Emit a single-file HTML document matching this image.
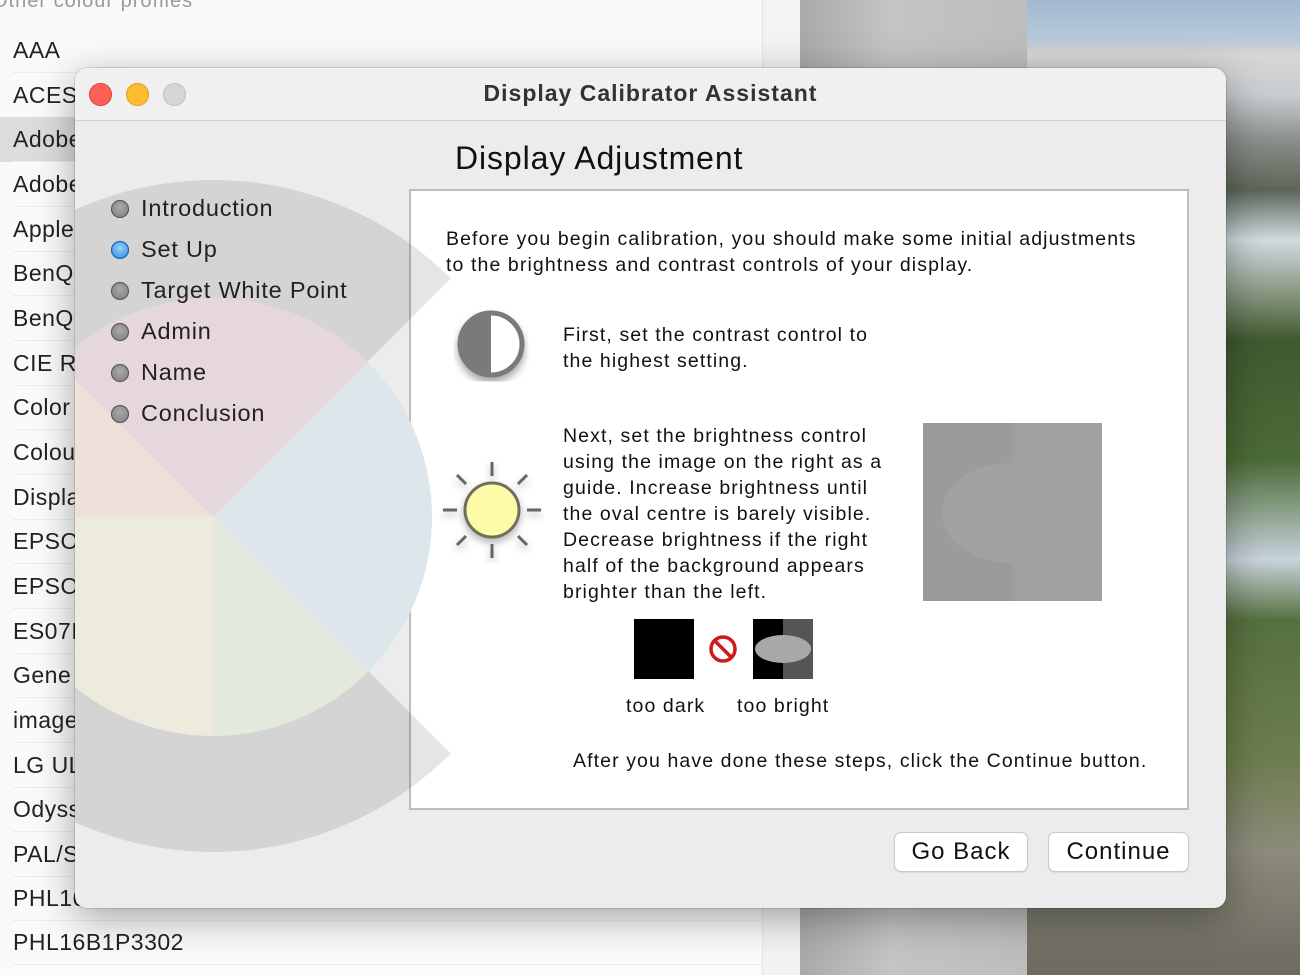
<!DOCTYPE html>
<html><head><meta charset="utf-8"><style>
*{margin:0;padding:0;box-sizing:border-box}
body{width:1300px;height:975px;overflow:hidden;position:relative;font-family:"Liberation Sans",sans-serif;background:#fff}
.list{position:absolute;left:0;top:0;width:762px;height:975px;background:#fafafa}
.list .hdr{position:absolute;left:-8px;top:-10px;font-size:20px;color:#999;letter-spacing:1px}
.row{position:absolute;left:0;width:762px;height:44.7px;font-size:23px;color:#222;padding-left:13px;line-height:44px;letter-spacing:.5px}
.row:after{content:"";position:absolute;left:13px;right:0;bottom:0;height:1px;background:#ececec}
.strip{position:absolute;left:762px;top:0;width:38px;height:975px;background:#f3f3f3;border-left:1px solid #e4e4e4}
.gray{position:absolute;left:800px;top:0;width:227px;height:975px;background:linear-gradient(90deg,#a9a9a9,#c4c4c4 40%,#bdbdbd)}
.photo{position:absolute;left:1027px;top:0;width:273px;height:975px;background:
linear-gradient(180deg,#9fb8d2 0,#b9c9da 40px,#d9d6d2 55px,#c7ccd2 95px,#8a8f8a 140px,#5c6658 190px,#d2dae2 240px,#8e9a86 290px,#3f5a30 340px,#4b6b36 460px,#c8d2dc 560px,#55703e 620px,#6d7e4e 760px,#8c8b7c 850px,#6c6a60 975px)}
.win{position:absolute;left:75px;top:68px;width:1151px;height:840px;background:#ececec;border-radius:12px;box-shadow:0 10px 40px rgba(0,0,0,.35),0 0 0 1px rgba(0,0,0,.12);overflow:hidden}
.title{height:53px;border-bottom:1px solid #d2d2d2;background:#f0f0f0;text-align:center;font-weight:bold;font-size:23px;line-height:50px;color:#333;letter-spacing:1px}
.dot{position:absolute;top:15px;width:23px;height:23px;border-radius:50%}
.box{position:absolute;left:334px;top:121px;width:780px;height:621px;background:#fff;border:2px solid #bdbdbd}
.h1{position:absolute;left:380px;top:72px;font-size:32px;color:#111;letter-spacing:.9px}
.steps{position:absolute;left:36px;top:127px;font-size:23.5px;color:#222;letter-spacing:.8px}
.steps div{height:41px;position:relative;padding-left:30px}
.steps div:before{content:"";position:absolute;left:0;top:5px;width:18px;height:18px;border-radius:50%;background:radial-gradient(circle at 50% 40%,#aaa,#777);box-shadow:inset 0 0 0 1px #555}
.steps div.on:before{background:radial-gradient(circle at 50% 40%,#9ad3ff,#1a7de0);box-shadow:inset 0 0 0 1px #1a5ea8}
.t{position:absolute;font-size:19.5px;color:#111;line-height:26px;letter-spacing:1.1px}
.btn{position:absolute;top:765px;height:38px;background:#fff;border-radius:6px;box-shadow:0 0 0 1px #c8c8c8,0 1px 2px rgba(0,0,0,.2);font-size:24px;text-align:center;line-height:37px;color:#111;letter-spacing:1px}
.wheel{position:absolute;left:-198px;top:112px;width:672px;height:672px;border-radius:50%;pointer-events:none;
background:conic-gradient(rgba(0,0,0,.1) 0 45deg,transparent 45deg 135deg,rgba(0,0,0,.1) 135deg 360deg);}
.inner{position:absolute;left:-81px;top:230px;width:438px;height:438px;border-radius:50%;
background:conic-gradient(#e6d7dd 0 45deg,#dde6ea 45deg 135deg,#e4e9de 135deg 180deg,#ecebdc 180deg 270deg,#ede1d9 270deg 315deg,#e6d7dd 315deg)}
</style></head><body>
<div class="list">
<div class="hdr">Other colour profiles</div>
<div class="row" style="top:28px">AAA</div>
<div class="row" style="top:73px">ACES</div>
<div class="row" style="top:117px;background:#dcdcdc">Adobe</div>
<div class="row" style="top:162px">Adobe</div>
<div class="row" style="top:207px">Apple</div>
<div class="row" style="top:251px">BenQ</div>
<div class="row" style="top:296px">BenQ</div>
<div class="row" style="top:341px">CIE R</div>
<div class="row" style="top:385px">Color</div>
<div class="row" style="top:430px">Colou</div>
<div class="row" style="top:475px">Displa</div>
<div class="row" style="top:519px">EPSO</div>
<div class="row" style="top:564px">EPSO</div>
<div class="row" style="top:609px">ES07I</div>
<div class="row" style="top:653px">Gene</div>
<div class="row" style="top:698px">image</div>
<div class="row" style="top:743px">LG UL</div>
<div class="row" style="top:787px">Odyss</div>
<div class="row" style="top:832px">PAL/S</div>
<div class="row" style="top:876px">PHL16</div>
<div class="row" style="top:920px">PHL16B1P3302</div>
</div>
<div class="strip"></div>
<div class="gray"></div>
<div class="photo"></div>
<div class="win">
<div class="title">Display Calibrator Assistant</div>
<div class="dot" style="left:14px;background:#fe5f57;box-shadow:inset 0 0 0 1px #e0443e"></div>
<div class="dot" style="left:51px;background:#febc2e;box-shadow:inset 0 0 0 1px #dea123"></div>
<div class="dot" style="left:88px;background:#d5d5d5;box-shadow:inset 0 0 0 1px #c2c2c2"></div>
<div class="h1">Display Adjustment</div>
<div class="box"></div>
<div class="wheel"></div>
<div class="inner"></div>
<div class="steps">
<div>Introduction</div><div class="on">Set Up</div><div>Target White Point</div><div>Admin</div><div>Name</div><div>Conclusion</div>
</div>
<div class="t" style="left:371px;top:158px">Before you begin calibration, you should make some initial adjustments<br>to the brightness and contrast controls of your display.</div>
<svg style="position:absolute;left:370px;top:236px" width="90" height="90">
<defs><filter id="s"><feDropShadow dx="0" dy="5" stdDeviation="4" flood-opacity=".35"/></filter></defs>
<g filter="url(#s)"><circle cx="46" cy="40" r="31" fill="#fff" stroke="#7a7a7a" stroke-width="5"/><path d="M46 9 A31 31 0 0 0 46 71 Z" fill="#7a7a7a"/></g>
</svg>
<div class="t" style="left:488px;top:254px">First, set the contrast control to<br>the highest setting.</div>
<svg style="position:absolute;left:364px;top:390px" width="105" height="105">
<defs><filter id="s2"><feDropShadow dx="0" dy="4" stdDeviation="4" flood-opacity=".3"/></filter></defs>
<g stroke="#666" stroke-width="3" filter="url(#s2)">
<line x1="53" y1="4" x2="53" y2="18"/><line x1="53" y1="86" x2="53" y2="100"/>
<line x1="4" y1="52" x2="18" y2="52"/><line x1="88" y1="52" x2="102" y2="52"/>
<line x1="18" y1="17" x2="27" y2="26"/><line x1="88" y1="17" x2="79" y2="26"/>
<line x1="18" y1="87" x2="27" y2="78"/><line x1="88" y1="87" x2="79" y2="78"/>
<circle cx="53" cy="52" r="27" fill="#fdfaa8" stroke="#6f6f5a"/></g>
</svg>
<div class="t" style="left:488px;top:355px">Next, set the brightness control<br>using the image on the right as a<br>guide. Increase brightness until<br>the oval centre is barely visible.<br>Decrease brightness if the right<br>half of the background appears<br>brighter than the left.</div>
<svg style="position:absolute;left:848px;top:355px" width="179" height="178">
<rect width="89" height="178" fill="#9b9b9b"/><rect x="89" width="90" height="178" fill="#a0a0a0"/>
<ellipse cx="89" cy="90" rx="70" ry="50" fill="#a2a2a2"/></svg>
<div style="position:absolute;left:559px;top:551px;width:60px;height:60px;background:#000"></div>
<svg style="position:absolute;left:632px;top:565px" width="32" height="32"><circle cx="16" cy="16" r="12" fill="none" stroke="#d01a1a" stroke-width="3.5"/><line x1="8" y1="8" x2="24" y2="24" stroke="#d01a1a" stroke-width="3.5"/></svg>
<svg style="position:absolute;left:678px;top:551px" width="60" height="60"><rect width="30" height="60" fill="#000"/><rect x="30" width="30" height="60" fill="#555"/><ellipse cx="30" cy="30" rx="28" ry="14" fill="#a8a8a8"/></svg>
<div class="t" style="left:551px;top:625px">too dark</div>
<div class="t" style="left:662px;top:625px">too bright</div>
<div class="t" style="left:498px;top:680px">After you have done these steps, click the Continue button.</div>
<div class="btn" style="left:820px;width:132px">Go Back</div>
<div class="btn" style="left:974px;width:139px">Continue</div>
</div>
</body></html>
